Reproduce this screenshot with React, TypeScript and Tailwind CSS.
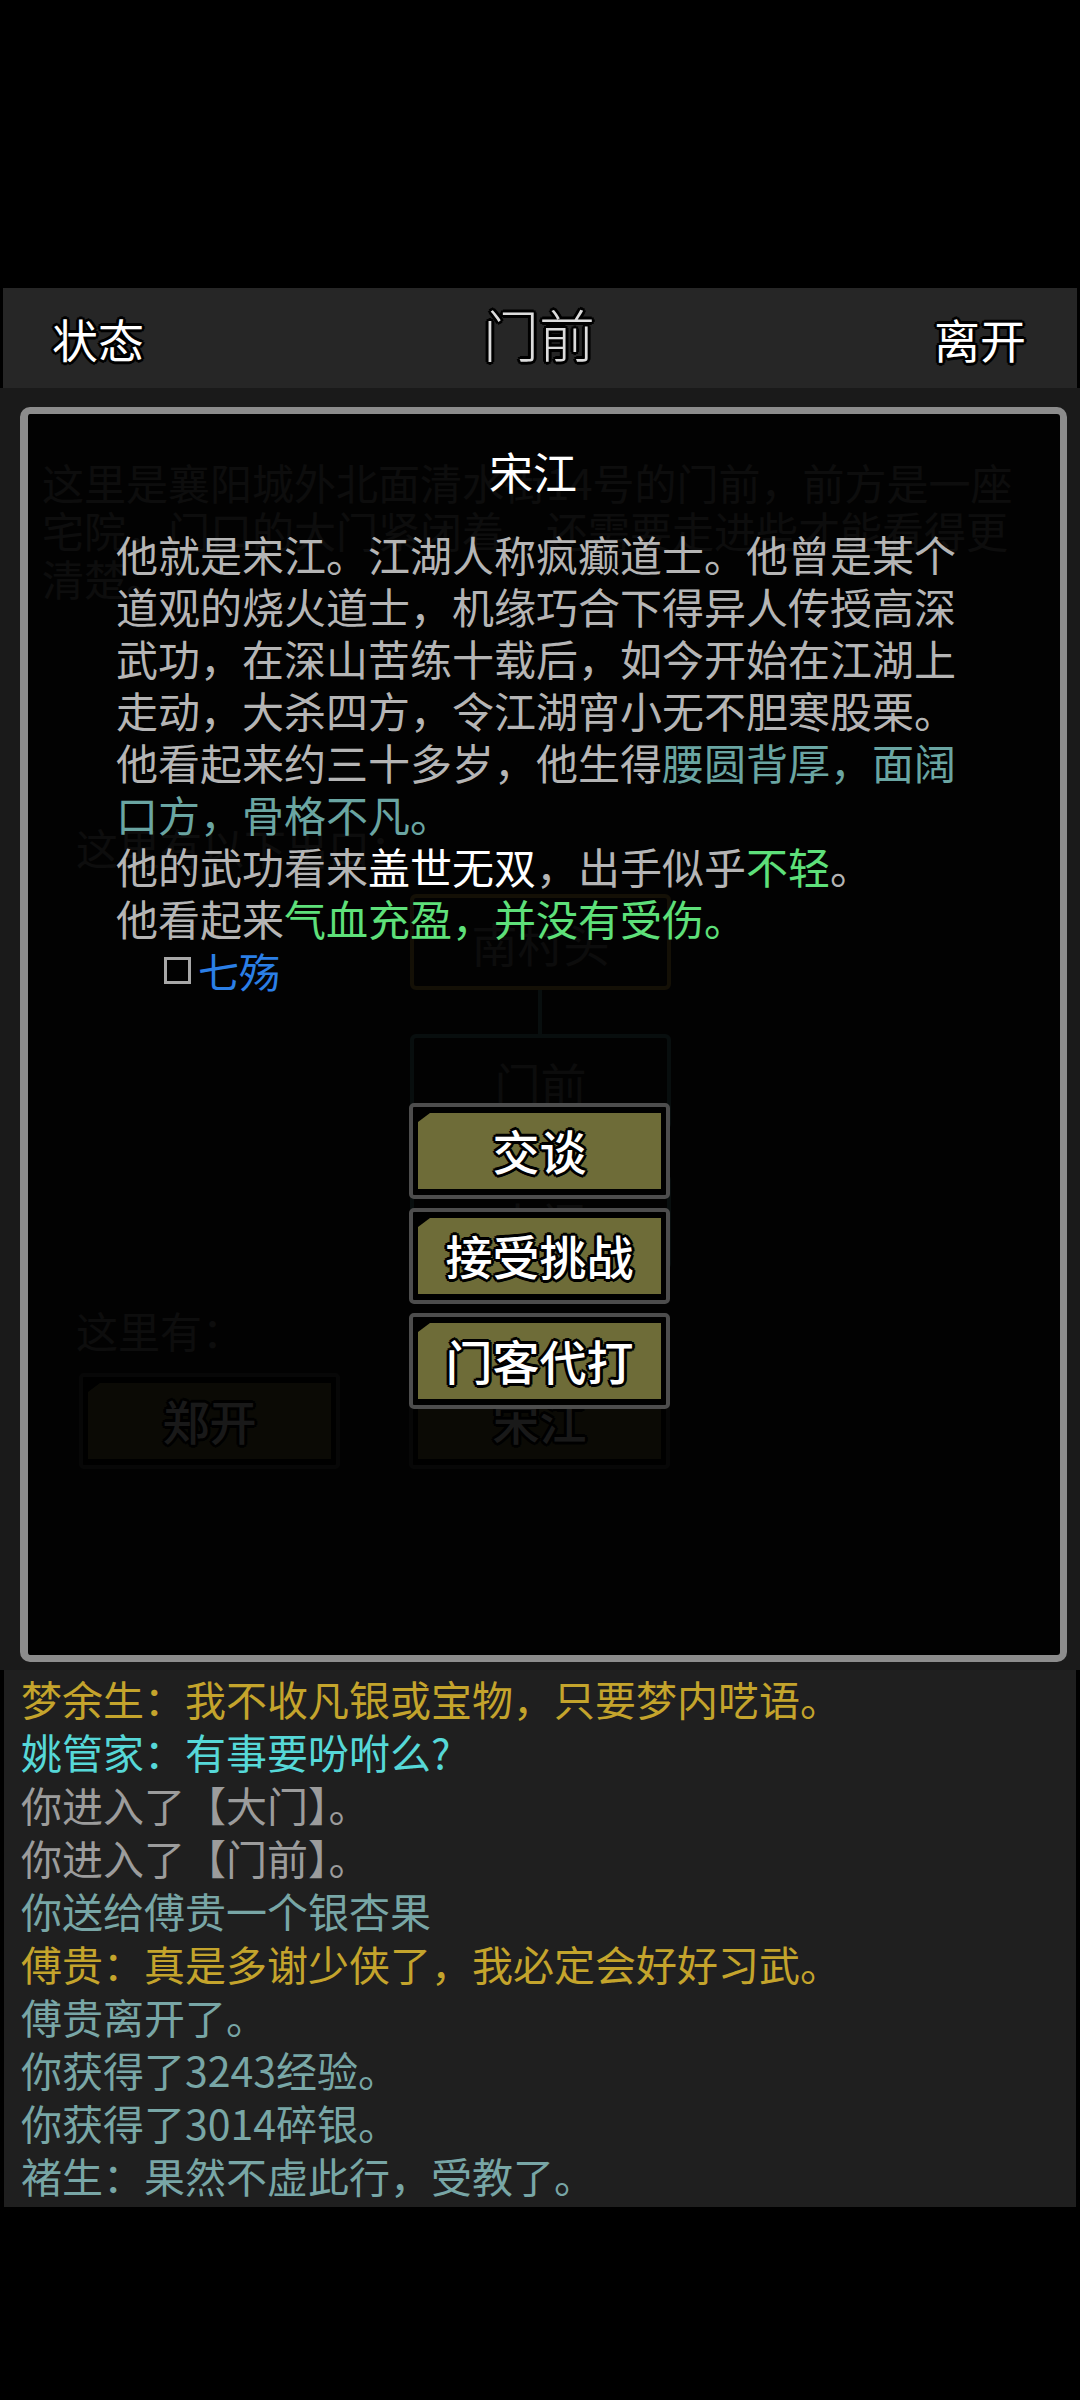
import React from 'react';

const outline =
  '[text-shadow:-2px_-2px_0_#000,2px_-2px_0_#000,-2px_2px_0_#000,2px_2px_0_#000,0_-3px_0_#000,0_3px_0_#000,-3px_0_0_#000,3px_0_0_#000]';

const ActionButton: React.FC<{ label: string }> = ({ label }) => (
  <div className="w-[261px] h-[96px] border-4 border-[#4d4d4d] rounded-[5px] bg-black px-[5px] py-[6px]">
    <div className="h-full bg-[#6e6c38] [clip-path:polygon(12px_0,100%_0,100%_100%,0_100%,0_9px)] flex items-center justify-center">
      <span
        className={`text-[47px] leading-none text-white font-medium pb-[4px] ${outline}`}
      >
        {label}
      </span>
    </div>
  </div>
);

const MapBox: React.FC<{ label: string; current?: boolean }> = ({ label, current }) => (
  <div
    className={`w-[261px] h-[96px] rounded-[6px] border-4 flex items-center justify-center text-[46px] text-[#7a7a7a] ${
      current ? 'border-[#4f8f8f]' : 'border-[#c8a040]'
    }`}
  >
    {label}
  </div>
);

const logLines = [
  { text: '梦余生：我不收凡银或宝物，只要梦内呓语。', color: 'text-[#c4a42c]' },
  { text: '姚管家：有事要吩咐么?', color: 'text-[#56d8d8]' },
  { text: '你进入了【大门】。', color: 'text-[#9c9c9c]' },
  { text: '你进入了【门前】。', color: 'text-[#9c9c9c]' },
  { text: '你送给傅贵一个银杏果', color: 'text-[#78a6a6]' },
  { text: '傅贵：真是多谢少侠了，我必定会好好习武。', color: 'text-[#c4a42c]' },
  { text: '傅贵离开了。', color: 'text-[#78a6a6]' },
  { text: '你获得了3243经验。', color: 'text-[#78a6a6]' },
  { text: '你获得了3014碎银。', color: 'text-[#78a6a6]' },
  { text: '褚生：果然不虚此行，受教了。', color: 'text-[#78a6a6]' },
];

export default function App() {
  return (
    <div className="w-[1080px] min-h-[2400px] bg-black font-['Noto_Sans_CJK_SC','Noto_Sans',sans-serif]">
      {/* status bar space */}
      <div className="h-[288px]" />

      {/* Header */}
      <header className="h-[100px] mx-[3px] bg-[#262626] flex items-center justify-between pl-[49px] pr-[51px]">
        <span className={`text-[46px] leading-none text-white ${outline}`}>状态</span>
        <span className={`text-[56px] leading-none text-[#dcdcdc] font-light pb-[10px] ${outline}`}>门前</span>
        <span className={`text-[46px] leading-none text-white ${outline}`}>离开</span>
      </header>

      {/* Room content with modal over it */}
      <main className="relative h-[1282px] bg-[#1a1a1a]">
        <div className="pt-[70px] pl-[42px] text-[42px] leading-[48px] text-[#828282]">
          <div>这里是襄阳城外北面清水街14号的门前，前方是一座</div>
          <div>宅院，门口的大门紧闭着，还需要走进些才能看得更</div>
          <div>清楚。</div>
        </div>
        <div className="mt-[221px] pl-[76px] text-[42px] leading-[48px] text-[#828282]">
          这里有以下出口：
        </div>
        <div className="mt-[23px] ml-[410px] flex flex-col items-start">
          <MapBox label="南村头" />
          <div className="ml-[128px] w-[4px] h-[44px] bg-[#4f8f8f]" />
          <MapBox label="门前" current />
          <div className="ml-[128px] w-[4px] h-[44px] bg-[#4f8f8f]" />
          <MapBox label="大门" current />
        </div>
        <div className="mt-[36px] pl-[76px] text-[42px] leading-[48px] text-[#828282]">这里有：</div>
        <div className="mt-[19px] pl-[79px] flex gap-[69px]">
          <ActionButton label="郑开" />
          <ActionButton label="宋江" />
        </div>

        {/* Modal */}
        <div className="absolute left-[20px] top-[19px] w-[1047px] h-[1255px] border-[7px] border-l-[8px] border-[#8c8c8c] rounded-[10px] bg-black/[0.9]">
          <div className="pt-[31px] pr-[22px] text-center text-[44px] leading-[52px] text-white">宋江</div>
          <div className="mt-[31px] pl-[88px] text-[42px] leading-[52px] text-[#b5b5b5]">
            <div>他就是宋江。江湖人称疯癫道士。他曾是某个</div>
            <div>道观的烧火道士，机缘巧合下得异人传授高深</div>
            <div>武功，在深山苦练十载后，如今开始在江湖上</div>
            <div>走动，大杀四方，令江湖宵小无不胆寒股栗。</div>
            <div>
              他看起来约三十多岁，他生得<span className="text-[#6aa5a2]">腰圆背厚，面阔</span>
            </div>
            <div className="text-[#6aa5a2]">口方，骨格不凡。</div>
            <div>
              他的武功看来<span className="text-white">盖世无双</span>，出手似乎
              <span className="text-[#5ee07a]">不轻</span>。
            </div>
            <div>
              他看起来<span className="text-[#5ee07a]">气血充盈，并没有受伤。</span>
            </div>
            <div className="pl-[48px] flex items-center gap-[7px]">
              <span className="w-[27px] h-[27px] border-[3px] border-[#a8a8a8]" />
              <span className="text-[41px] text-[#2b7fe6]">七殇</span>
            </div>
          </div>
          <div className="mt-[107px] ml-[381px] flex flex-col gap-[9px]">
            <ActionButton label="交谈" />
            <ActionButton label="接受挑战" />
            <ActionButton label="门客代打" />
          </div>
        </div>
      </main>

      {/* Message log */}
      <section className="mx-[4px] bg-[#1f1f1f] pt-[2px] pb-[5px] pl-[17px] text-[41px] leading-[53px]">
        {logLines.map((line, i) => (
          <div key={i} className={line.color}>
            {line.text}
          </div>
        ))}
      </section>
    </div>
  );
}
